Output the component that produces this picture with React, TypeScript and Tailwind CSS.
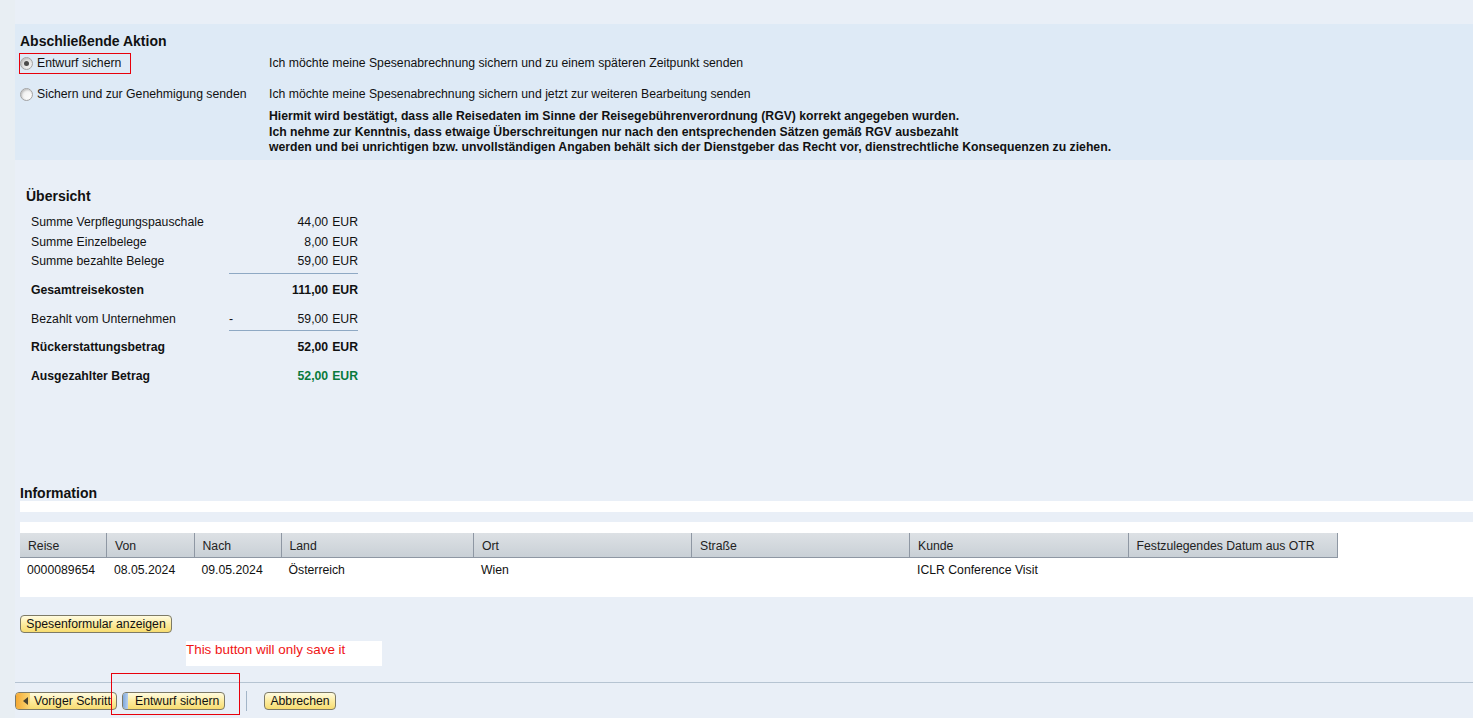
import React from "react"

const columns = [
  { label: "Reise", value: "0000089654", width: "w-[87px]" },
  { label: "Von", value: "08.05.2024", width: "w-[87.5px]" },
  { label: "Nach", value: "09.05.2024", width: "w-[87px]" },
  { label: "Land", value: "Österreich", width: "w-[192.5px]" },
  { label: "Ort", value: "Wien", width: "w-[218px]" },
  { label: "Straße", value: "", width: "w-[218px]" },
  { label: "Kunde", value: "ICLR Conference Visit", width: "w-[218.5px]" },
  { label: "Festzulegendes Datum aus OTR", value: "", width: "w-[209px]" },
]

function Radio({ checked }: { checked?: boolean }) {
  return (
    <span
      className={`flex h-[13px] w-[13px] shrink-0 items-center justify-center rounded-full border border-[#a3a3a3] bg-gradient-to-br shadow-[inset_1px_1px_2px_#bdbdbd] ${
        checked ? "from-[#d8d8d8] to-[#f4f4f4]" : "from-[#ececec] to-white"
      }`}
    >
      {checked && <span className="h-[5px] w-[5px] rounded-full bg-[#4a4a4a]" />}
    </span>
  )
}

function Row({
  label,
  value,
  minus,
  bold,
  green,
  className,
}: {
  label: string
  value: string
  minus?: boolean
  bold?: boolean
  green?: boolean
  className?: string
}) {
  return (
    <div className={`flex items-center ${bold ? "font-bold" : ""} ${className ?? ""}`}>
      <span className="w-[198px]">{label}</span>
      <span className="flex w-[129px] justify-between">
        <span>{minus ? "-" : ""}</span>
        <span className={green ? "text-[#0a7a3c]" : ""}>
          {value}
          <span className="ml-[4px]">EUR</span>
        </span>
      </span>
    </div>
  )
}

function SapButton({ children, className }: { children: React.ReactNode; className?: string }) {
  return (
    <button
      className={`flex h-[18px] items-center rounded-[4px] border border-[#7d7a66] bg-gradient-to-b from-[#fffbe0] via-[#fdec9f] to-[#f7dc70] text-[#111] ${className ?? ""}`}
    >
      {children}
    </button>
  )
}

export default function App() {
  return (
    <div className="relative h-[718px] overflow-hidden bg-[#e8eef3] pl-[15px] font-['Liberation_Sans',Arial,sans-serif] text-[12.24px] leading-[14px] text-[#111]">
      <div className="flex h-full flex-col bg-[#e9eff7]">
        <section className="mt-6 flex h-[136px] flex-col bg-[#deeaf6] pl-[5px] pt-[10px]">
          <h2 className="text-[14px] font-bold leading-[14px] text-[#111]">Abschließende Aktion</h2>
          <div className="mt-[5px] flex h-[20px] items-center">
            <label className="flex w-[249px] items-center gap-[4px]">
              <Radio checked />
              <span>Entwurf sichern</span>
            </label>
            <span>Ich möchte meine Spesenabrechnung sichern und zu einem späteren Zeitpunkt senden</span>
          </div>
          <div className="mt-[11px] flex h-[20px] items-center">
            <label className="flex w-[249px] items-center gap-[4px]">
              <Radio />
              <span>Sichern und zur Genehmigung senden</span>
            </label>
            <span>Ich möchte meine Spesenabrechnung sichern und jetzt zur weiteren Bearbeitung senden</span>
          </div>
          <p className="ml-[249px] mt-[5px] font-bold leading-[15.5px] text-[#111]">
            Hiermit wird bestätigt, dass alle Reisedaten im Sinne der Reisegebührenverordnung (RGV) korrekt angegeben wurden.
            <br />
            Ich nehme zur Kenntnis, dass etwaige Überschreitungen nur nach den entsprechenden Sätzen gemäß RGV ausbezahlt
            <br />
            werden und bei unrichtigen bzw. unvollständigen Angaben behält sich der Dienstgeber das Recht vor, dienstrechtliche Konsequenzen zu ziehen.
          </p>
        </section>

        <section className="mt-[29px] pl-[11px]">
          <h2 className="text-[14px] font-bold leading-[14px] text-[#111]">Übersicht</h2>
          <div className="ml-[5px] mt-[9px] flex flex-col">
            <Row label="Summe Verpflegungspauschale" value="44,00" className="h-[20px]" />
            <Row label="Summe Einzelbelege" value="8,00" className="h-[19px]" />
            <Row label="Summe bezahlte Belege" value="59,00" className="h-[19px]" />
            <div className="ml-[198px] mt-[3px] h-px w-[129px] bg-[#8fa9c4]" />
            <Row label="Gesamtreisekosten" value="111,00" bold className="mt-[6px] h-[20px]" />
            <Row label="Bezahlt vom Unternehmen" minus value="59,00" className="mt-[9px] h-[20px]" />
            <div className="ml-[198px] mt-px h-px w-[129px] bg-[#8fa9c4]" />
            <Row label="Rückerstattungsbetrag" value="52,00" bold className="mt-[6px] h-[20px]" />
            <Row label="Ausgezahlter Betrag" value="52,00" bold green className="mt-[9px] h-[20px]" />
          </div>
        </section>

        <section className="mt-[100px] pl-[5px]">
          <h2 className="text-[14px] font-bold leading-[14px] text-[#111]">Information</h2>
          <div className="mt-[1px] h-[11px] bg-white" />
          <div className="mt-[10px] h-[75px] bg-white pt-[11px]">
            <div className="flex">
              {columns.map((c) => (
                <div
                  key={c.label}
                  className={`flex h-[25px] shrink-0 items-center border-b border-r border-b-[#8e97a3] border-r-[#8e97a3] bg-gradient-to-b from-[#dde1e5] to-[#c9d0d6] pl-[8px] pt-[1px] text-[#222] ${c.width}`}
                >
                  {c.label}
                </div>
              ))}
            </div>
            <div className="flex pt-[5px]">
              {columns.map((c) => (
                <div key={c.label} className={`h-[14px] shrink-0 pl-[7px] ${c.width}`}>
                  {c.value}
                </div>
              ))}
            </div>
          </div>
        </section>

        <div className="ml-[5px] mt-[18px]">
          <SapButton className="w-[152px] justify-center">Spesenformular anzeigen</SapButton>
        </div>

        <div className="ml-[171px] mt-[8px] h-[25px] w-[196px] bg-white text-[13.4px] leading-[17px] text-[#f01414]">
          This button will only save it
        </div>

        <footer className="mt-[16px] flex h-[36px] items-center border-t border-[#b6c4d2]">
          <SapButton className="w-[102px] overflow-hidden">
            <span className="flex h-full w-[14px] shrink-0 items-center justify-end bg-gradient-to-r from-[#f5a932] via-[#f8c155] to-[#fbd877] pr-[2px]">
              <svg width="5" height="8" viewBox="0 0 5 8">
                <path d="M5 0V8L0 4Z" fill="#4a4230" />
              </svg>
            </span>
            <span className="ml-[4px] whitespace-nowrap">Voriger Schritt</span>
          </SapButton>
          <SapButton className="ml-[5px] w-[103px] overflow-hidden border-[#1a1a1a]">
            <span className="h-full w-[5px] shrink-0 bg-gradient-to-r from-[#7fa8dc] to-[#b9d0ec]" />
            <span className="ml-[7px] whitespace-nowrap">Entwurf sichern</span>
          </SapButton>
          <span className="ml-[21px] h-[20px] w-px bg-[#a3b5c8]" />
          <SapButton className="ml-[17px] w-[72px] justify-center">Abbrechen</SapButton>
        </footer>
      </div>

      {/* red annotation boxes drawn on top of the form */}
      <div className="pointer-events-none absolute left-[19px] top-[53px] h-[21px] w-[112px] border border-[#e8000b]" />
      <div className="pointer-events-none absolute left-[111px] top-[673px] h-[42px] w-[129px] border border-[#e8000b]" />
    </div>
  )
}
